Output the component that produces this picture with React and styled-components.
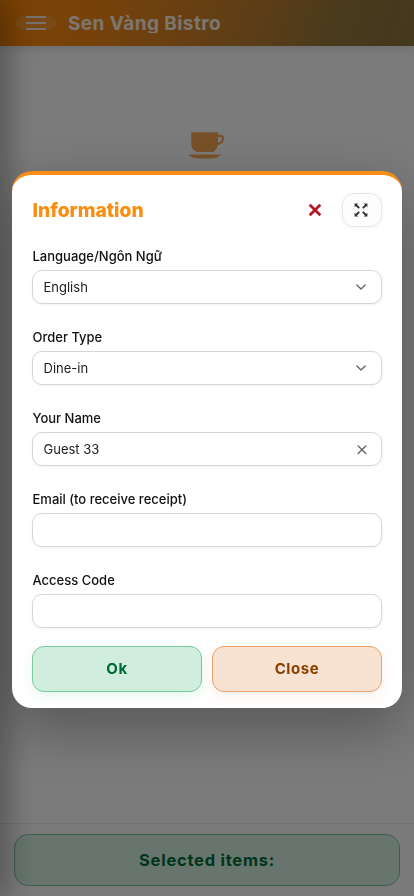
import React from "react";
import styled, { createGlobalStyle } from "styled-components";

const GlobalStyle = createGlobalStyle`
  * { box-sizing: border-box; }
  body { margin: 0; overflow: hidden; font-family: Inter, sans-serif; }
  button, input { font-family: inherit; }
`;

const Page = styled.div`
  height: 896px;
  display: flex;
  flex-direction: column;
  background: #f6f6f8;
`;

const Header = styled.header`
  height: 46px;
  flex: none;
  display: flex;
  align-items: center;
  gap: 12px;
  padding: 0 16px;
  background: linear-gradient(110deg, #fa8408 0%, #ec8416 25%, #b87b30 62%, #8f763a 82%, #88703c 100%);
  box-shadow: 0 2px 10px rgba(0, 0, 0, 0.12);
`;

const MenuButton = styled.button`
  width: 40px;
  height: 14px;
  padding: 0;
  border: 0;
  border-radius: 7px;
  background: rgba(255, 255, 255, 0.13);
  display: flex;
  justify-content: center;
`;

const Brand = styled.h1`
  margin: 0;
  height: 19px;
  overflow: hidden;
  font-size: 19px;
  line-height: 20px;
  font-weight: 700;
  letter-spacing: 0.42px;
  color: #fff;
  opacity: 0.86;
`;

const Content = styled.main`
  flex: 1;
  display: flex;
  flex-direction: column;
  align-items: center;
  padding-top: 86px;
`;

const Footer = styled.footer`
  height: 73px;
  flex: none;
  padding: 10px 14px;
  border-top: 1px solid #dfe6e5;
  background: #f4f4f4;
`;

const SelectedButton = styled.button`
  width: 100%;
  height: 52px;
  padding: 0;
  border: 1px solid #75bd9b;
  border-radius: 14px;
  background: #cfeadc;
  color: #006b39;
  font-size: 16.5px;
  font-weight: 700;
  letter-spacing: 0.75px;
`;

const DrawerShadow = styled.div`
  position: fixed;
  inset: 0 auto 0 -20px;
  width: 20px;
  box-shadow: 0 0 32px 4px rgba(0, 0, 0, 0.42);
`;

const Overlay = styled.div`
  position: fixed;
  inset: 0;
  display: flex;
  align-items: flex-start;
  justify-content: center;
  padding-top: 171px;
  background: rgba(0, 0, 0, 0.5);
`;

const Dialog = styled.section`
  width: 390px;
  height: 537px;
  padding: 18px 20px 16px;
  border-top: 4px solid #f68e16;
  border-radius: 20px;
  background: #fff;
  box-shadow: 0 20px 60px rgba(0, 0, 0, 0.3);
`;

const TitleRow = styled.div`
  display: flex;
  align-items: center;
  height: 34px;
`;

const Title = styled.h2`
  margin: 0;
  flex: 1;
  padding-left: 0.5px;
  color: #fa8c0e;
  font-size: 19.2px;
  line-height: 24px;
  font-weight: 800;
  letter-spacing: 0;
`;

const IconButton = styled.button`
  width: 40px;
  height: 34px;
  margin-left: ${(p) => (p.$framed ? "7px" : "0")};
  padding: ${(p) => (p.$framed ? "0 2px 0 0" : "0")};
  display: flex;
  align-items: center;
  justify-content: center;
  border: 1px solid ${(p) => (p.$framed ? "#e7e7e7" : "transparent")};
  border-radius: 12px;
  background: ${(p) => (p.$framed ? "#fdfdfd" : "transparent")};
  box-shadow: ${(p) => (p.$framed ? "0 1px 4px rgba(0,0,0,.05)" : "none")};
`;

const Fields = styled.div`
  padding-top: 20px;
`;

const Field = styled.div`
  height: ${(p) => (p.$last ? "75px" : "81px")};
`;

const Label = styled.label`
  display: block;
  height: 23px;
  padding-left: 0.5px;
  line-height: 19px;
  font-size: 13px;
  font-weight: 500;
  color: #111;
`;

const Control = styled.div`
  height: 34px;
  display: flex;
  align-items: center;
  justify-content: space-between;
  padding: 0 12px 0 10.5px;
  border: 1px solid #d6d6d6;
  border-radius: 10px;
  background: #fff;
  box-shadow: 0 1px 3px rgba(0, 0, 0, 0.06);
  color: #202020;
  font-size: 13px;
`;

const Actions = styled.div`
  display: grid;
  grid-template-columns: 1fr 1fr;
  gap: 10px;
`;

const ActionButton = styled.button`
  height: 46px;
  padding: 0 0 1px;
  border-radius: 12px;
  border: 1px solid ${(p) => (p.$kind === "ok" ? "#79c99d" : "#e9a16d")};
  background: ${(p) => (p.$kind === "ok" ? "#d1eddd" : "#f8e2d2")};
  color: ${(p) => (p.$kind === "ok" ? "#006b35" : "#8c4000")};
  box-shadow: 0 4px 14px ${(p) => (p.$kind === "ok" ? "rgba(0,170,80,.1)" : "rgba(240,100,20,.1)")};
  font-size: 15px;
  font-weight: 700;
  letter-spacing: 0.6px;
`;

const MenuIcon = () => (
  <svg width="22" height="14" viewBox="0 0 22 14" stroke="#e8e2dc" strokeWidth="2">
    <path d="M1 1H21M1 7H21M1 13H21" />
  </svg>
);

const CupIcon = () => (
  <svg width="38" height="28" viewBox="0 0 38 28" fill="#f0a250">
    <path fillRule="evenodd" d="M3.3.2H30V2.8H32.5Q36 3 36 6.8Q35.5 12 29.8 13Q29 17.5 25 20H9Q3.3 17 3.3 12.5ZM30 5V10.6Q33.8 9.8 33.8 6.8Q33.8 5 32.5 5Z" />
    <path d="M.5 22.4H33Q31.5 26.6 16.7 26.6Q2 26.6.5 22.4Z" />
  </svg>
);

const CrossIcon = () => (
  <svg width="14" height="14" viewBox="0 0 14 14" stroke="#b31925" strokeWidth="2.8" strokeLinecap="square">
    <path d="M2.7 2.7L11.3 11.3M11.3 2.7L2.7 11.3" />
  </svg>
);

const ExpandIcon = () => (
  <svg width="14" height="14" viewBox="0 0 14 14" fill="#333" stroke="#333" strokeWidth="1.9">
    <path d="M2 2L5.2 5.2M12 2L8.8 5.2M2 12L5.2 8.8M12 12L8.8 8.8" />
    <path stroke="none" d="M.6.6H4.2L.6 4.2ZM13.4.6V4.2L9.8.6ZM.6 13.4V9.8L4.2 13.4ZM13.4 13.4H9.8L13.4 9.8Z" />
  </svg>
);

const ChevronIcon = () => (
  <svg width="16" height="16" viewBox="0 0 16 16" fill="none" stroke="#666" strokeWidth="1.4" strokeLinecap="round" strokeLinejoin="round">
    <path d="M3.9 6.1L8 10.1L12.1 6.1" />
  </svg>
);

const ClearIcon = () => (
  <svg width="14" height="14" viewBox="0 0 14 14" stroke="#666" strokeWidth="1.4" strokeLinecap="round">
    <path d="M3.2 3.9L10.8 11.5M10.8 3.9L3.2 11.5" />
  </svg>
);

const fields = [
  { label: "Language/Ngôn Ngữ", value: "English", icon: <ChevronIcon /> },
  { label: "Order Type", value: "Dine-in", icon: <ChevronIcon /> },
  { label: "Your Name", value: "Guest 33", icon: <ClearIcon /> },
  { label: "Email (to receive receipt)" },
  { label: "Access Code" },
];

export default function App() {
  return (
    <>
      <GlobalStyle />
      <Page>
        <Header>
          <MenuButton aria-label="Menu"><MenuIcon /></MenuButton>
          <Brand>Sen Vàng Bistro</Brand>
        </Header>
        <Content><CupIcon /></Content>
        <Footer><SelectedButton>Selected items:</SelectedButton></Footer>
      </Page>
      <DrawerShadow />
      <Overlay>
        <Dialog role="dialog" aria-label="Information">
          <TitleRow>
            <Title>Information</Title>
            <IconButton aria-label="Cancel"><CrossIcon /></IconButton>
            <IconButton $framed aria-label="Expand"><ExpandIcon /></IconButton>
          </TitleRow>
          <Fields>
            {fields.map((f, i) => (
              <Field key={f.label} $last={i === fields.length - 1}>
                <Label>{f.label}</Label>
                <Control>
                  <span>{f.value}</span>
                  {f.icon}
                </Control>
              </Field>
            ))}
          </Fields>
          <Actions>
            <ActionButton $kind="ok">Ok</ActionButton>
            <ActionButton $kind="close">Close</ActionButton>
          </Actions>
        </Dialog>
      </Overlay>
    </>
  );
}
